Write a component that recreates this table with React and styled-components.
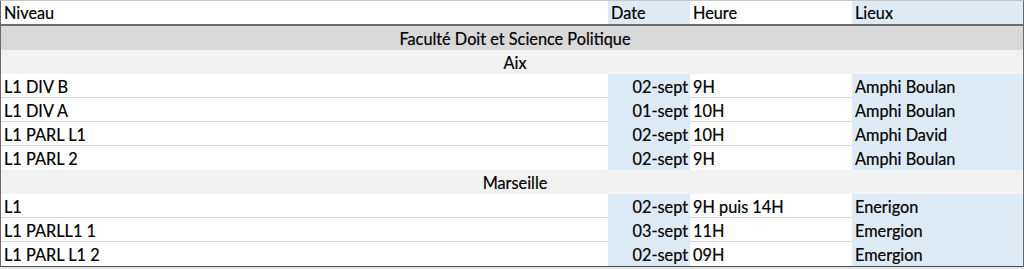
import React from "react";
import styled, { createGlobalStyle } from "styled-components";

const GlobalStyle = createGlobalStyle`
  html, body { margin: 0; padding: 0; background: #e6e6e6; }
  body { font-family: "Lato", "Liberation Sans", sans-serif; font-size: 16.3px; color: #000; }
`;

const rows = [
  { section: "Faculté Doit et Science Politique", tone: "dark" },
  { section: "Aix", tone: "light" },
  { niveau: "L1 DIV B", date: "02-sept", heure: "9H", lieu: "Amphi Boulan" },
  { niveau: "L1 DIV A", date: "01-sept", heure: "10H", lieu: "Amphi Boulan" },
  { niveau: "L1 PARL L1", date: "02-sept", heure: "10H", lieu: "Amphi David" },
  { niveau: "L1 PARL 2", date: "02-sept", heure: "9H", lieu: "Amphi Boulan" },
  { section: "Marseille", tone: "light" },
  { niveau: "L1", date: "02-sept", heure: "9H puis 14H", lieu: "Enerigon" },
  { niveau: "L1 PARLL1 1", date: "03-sept", heure: "11H", lieu: "Emergion" },
  { niveau: "L1 PARL L1 2", date: "02-sept", heure: "09H", lieu: "Emergion" },
];

export default function App() {
  return (
    <>
      <GlobalStyle />
      <Sheet>
        <HeadRow>
          <Cell>Niveau</Cell>
          <Cell $blue>Date</Cell>
          <Cell>Heure</Cell>
          <Cell $blue>Lieux</Cell>
        </HeadRow>
        {rows.map((r, i) => {
          if (r.section) {
            return <Section key={i} $tone={r.tone}>{r.section}</Section>;
          }
          const next = rows[i + 1];
          const line = next && !next.section;
          return (
            <Row key={i}>
              <Cell $line={line}>{r.niveau}</Cell>
              <Cell $blue $right>{r.date}</Cell>
              <Cell $line={line}>{r.heure}</Cell>
              <Cell $blue>{r.lieu}</Cell>
            </Row>
          );
        })}
      </Sheet>
    </>
  );
}

const Sheet = styled.div`
  width: 1022px;
  border-top: 1px solid #c6c6c6;
  border-left: 1px solid #6a6a6a;
  border-right: 1px solid #6a6a6a;
  border-bottom: 1px solid #4a4a4a;
  background: #fff;
`;

const Row = styled.div`
  display: grid;
  grid-template-columns: 607px 82px 162px 171px;
  height: 24px;
`;

const HeadRow = styled(Row)`
  height: 23px;
  border-bottom: 2px solid #6e6e6e;
`;

const Cell = styled.div`
  display: flex;
  align-items: center;
  justify-content: ${(p) => (p.$right ? "flex-end" : "flex-start")};
  padding: 1px 2px 0 3px;
  white-space: nowrap;
  background: ${(p) => (p.$blue ? "#ddebf7" : "#fff")};
  box-sizing: border-box;
  border-bottom: 1px solid ${(p) => (p.$line ? "#d4d4d4" : "transparent")};
  -webkit-text-stroke: 0.2px #000;
`;

const Section = styled.div`
  height: 24px;
  display: flex;
  align-items: center;
  justify-content: center;
  background: ${(p) => (p.$tone === "dark" ? "#d9d9d9" : "#f2f2f2")};
  padding: 1px 0 0 6px;
  box-sizing: border-box;
  -webkit-text-stroke: 0.2px #000;
`;
